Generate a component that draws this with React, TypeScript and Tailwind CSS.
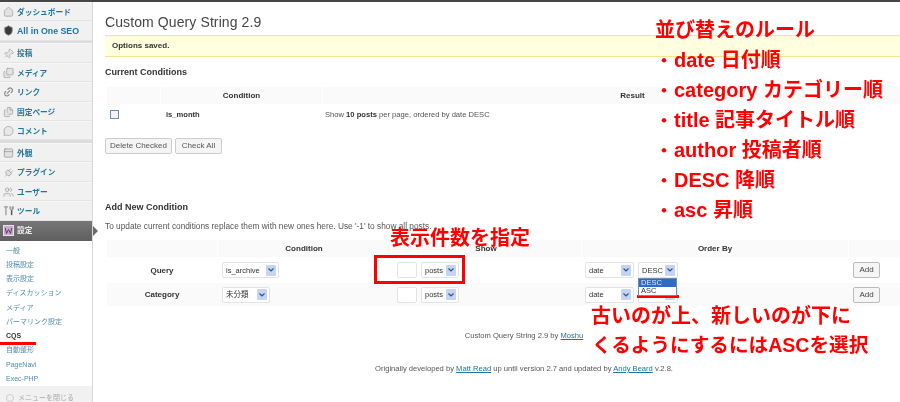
import { Files, House, Images, Link2, MessageCircle, PanelTop, Pin, Plug, Shield, Users } from "lucide-react";
import type { ReactNode } from "react";

const FONT = "[font-family:'Liberation_Sans','Noto_Sans_CJK_JP',sans-serif]";

function SettingsIcon() {
  return (
    <svg width="11" height="11" viewBox="0 0 11 11" className="shrink-0">
      <rect x="0.5" y="0.5" width="10" height="10" fill="#c9a9cc" stroke="#eadfec" />
      <path d="M2.3 3l1.200 5.500 2-4 2 4 1.200-5.500" fill="none" stroke="#5c3d66" strokeWidth="1" />
    </svg>
  );
}

function ToolsIcon() {
  return (
    <svg width="12" height="12" viewBox="0 0 12 12">
      <path d="M1 1.500h4.500M3.200 1.500v9" fill="none" stroke="#999" strokeWidth="1.400" />
      <path d="M8.500 1v3M10.300 1v3M7.500 1v2.500q0 1.300 1.900 1.300t1.900-1.300V1" fill="none" stroke="#777" strokeWidth="0.800" />
      <path d="M9.400 5v5.500" fill="none" stroke="#555" strokeWidth="1.600" />
    </svg>
  );
}

function MenuItem({ icon, label }: { icon: ReactNode; label: string }) {
  return (
    <div className="flex h-[19.5px] items-center gap-[3px] border-b border-b-[#e4e4e4] border-t border-t-[#f7f7f7] pl-[3px]">
      <span className="flex w-[11px] shrink-0 justify-center pt-[1px] text-[#8a8a8a]">{icon}</span>
      <span className="whitespace-nowrap pt-[2px] text-[7.7px] font-bold text-[#21759b]">{label}</span>
    </div>
  );
}

function Separator() {
  return <div className="h-[2.5px] bg-[#dcdcdc]" />;
}

function Sidebar() {
  const sub = ["一般", "投稿設定", "表示設定", "ディスカッション", "メディア", "パーマリンク設定"];
  return (
    <aside className="flex w-[93px] shrink-0 flex-col border-r border-r-[#d8d8d8] bg-[#f1f1f1]">
      <MenuItem icon={<House size={12} strokeWidth={1.2} fill="#e2e2e2" />} label="ダッシュボード" />
      <div className="flex h-[19.5px] items-center gap-[3px] border-b border-b-[#e4e4e4] pl-[3px]">
        <Shield size={11} fill="#3a3a3a" stroke="#777" className="shrink-0" />
        <span className="whitespace-nowrap pt-[1px] text-[8.8px] font-bold text-[#21759b]">All in One SEO</span>
      </div>
      <Separator />
      <MenuItem icon={<Pin size={12} strokeWidth={1.1} fill="#e8e8e8" className="rotate-45" />} label="投稿" />
      <MenuItem icon={<Images size={12} strokeWidth={1.2} fill="#e2e2e2" />} label="メディア" />
      <MenuItem icon={<Link2 size={12} strokeWidth={2.4} className="-rotate-45" />} label="リンク" />
      <MenuItem icon={<Files size={12} strokeWidth={1.2} fill="#e2e2e2" />} label="固定ページ" />
      <MenuItem icon={<MessageCircle size={12} strokeWidth={1.2} fill="#e8e8e8" />} label="コメント" />
      <Separator />
      <MenuItem icon={<PanelTop size={12} strokeWidth={1.4} fill="#e2e2e2" />} label="外観" />
      <MenuItem icon={<Plug size={12} strokeWidth={1.2} fill="#e2e2e2" className="rotate-45" />} label="プラグイン" />
      <MenuItem icon={<Users size={12} strokeWidth={1.2} fill="#e8e8e8" />} label="ユーザー" />
      <MenuItem icon={<ToolsIcon />} label="ツール" />
      <div className="relative flex h-[20px] items-center gap-[3px] bg-gradient-to-b from-[#777] to-[#5f5f5f] pl-[3px]">
        <SettingsIcon />
        <span className="pt-[1px] text-[7.7px] font-bold text-[#eeeeee]">設定</span>
        <span className="absolute -right-[6px] top-[5px] h-0 w-0 border-y-[5px] border-l-[5px] border-y-transparent border-l-[#6a6a6a]" />
      </div>
      <div className="flex flex-col bg-white pl-[6px] pt-[3px] text-[7px] leading-[14.25px] text-[#4f8fae]">
        {sub.map((s) => (
          <span key={s} className="h-[14.25px] whitespace-nowrap">{s}</span>
        ))}
        <span className="h-[14.25px] font-bold text-[#333]">CQS</span>
        <span className="h-[14.25px]">自動整形</span>
        <span className="h-[14.25px]">PageNavi</span>
        <span className="h-[14.25px]">Exec-PHP</span>
      </div>
      <div className="flex flex-1 items-start gap-[4px] bg-[#f1f1f1] pl-[6px] pt-[8px] text-[7px] leading-[8px] text-[#aaa]">
        <span className="h-[8px] w-[8px] shrink-0 rounded-full border border-[#ccc]" />
        メニューを閉じる
      </div>
    </aside>
  );
}

function Select({ label, width }: { label: string; width: string }) {
  return (
    <div className={`flex h-[16px] items-center justify-between rounded-[2px] border border-[#e3e3e3] bg-white pl-[3px] pr-[2px] text-[7.5px] text-[#333] ${width}`}>
      <span className="whitespace-nowrap pt-[1px]">{label}</span>
      <span className="flex h-[11px] w-[10px] items-center justify-center rounded-[1px] bg-[#c3d4f7]">
        <svg width="6" height="4" viewBox="0 0 6 4">
          <path d="M0.500 0.500L3 3l2.500-2.500" fill="none" stroke="#33527f" strokeWidth="1.200" />
        </svg>
      </span>
    </div>
  );
}

function ShowCell() {
  return (
    <div className="flex items-center gap-[4px] pl-[6px]">
      <div className="h-[16px] w-[20px] rounded-[2px] border border-[#e3e3e3] bg-white" />
      <Select label="posts" width="w-[38px]" />
    </div>
  );
}

function AddButton() {
  return (
    <button className="flex h-[16px] w-[27px] items-center justify-center rounded-[2px] border border-[#bbb] bg-[#f5f5f5] text-[8px] text-[#444]">
      Add
    </button>
  );
}

function Main() {
  return (
    <main className="min-w-0 flex-1 overflow-hidden">
      <div className="w-[795px] pl-[12px] pt-[11px] text-[8.3px] text-[#444]">
        <h1 className="text-[14px] leading-[18px] tracking-[0.1px] text-[#464646]">Custom Query String 2.9</h1>
        <div className="mt-[4px] -mr-[100px] flex h-[22px] items-center border-y border-y-[#f0e68c] bg-[#ffffe0] pl-[7px] text-[8px] font-bold text-[#333]">
          Options saved.
        </div>
        <h3 className="mt-[9px] text-[9px] font-bold leading-[12px] text-[#333]">Current Conditions</h3>
        <div className="ml-[2px] mt-[9px] -mr-[100px]">
          <div className="grid h-[17px] grid-cols-[53px_161px_1fr] gap-[1px] text-[8px] font-bold text-[#333]">
            <div className="bg-[#fafafa]" />
            <div className="flex items-center justify-center bg-[#fafafa]">Condition</div>
            <div className="flex items-center justify-center bg-[#fafafa] pr-[46px]">Result</div>
          </div>
          <div className="grid h-[21px] grid-cols-[53px_161px_1fr] items-center gap-[1px] text-[7.6px]">
            <div className="pl-[3px]">
              <div className="h-[9px] w-[9px] border border-[#6b8db5] bg-[#f3f3f3]" />
            </div>
            <div className="pl-[5px] font-bold text-[#333]">is_month</div>
            <div className="pl-[2px] text-[#555]">Show <b className="text-[#333]">10 posts</b> per page, ordered by date DESC</div>
          </div>
        </div>
        <div className="mt-[13px] flex gap-[3px] text-[8px]">
          <button className="h-[16px] w-[67px] rounded-[2px] border border-[#ccc] bg-[#f5f5f5] text-[#555]">Delete Checked</button>
          <button className="h-[16px] w-[47px] rounded-[2px] border border-[#ccc] bg-[#f5f5f5] text-[#555]">Check All</button>
        </div>
        <h3 className="mt-[47px] text-[9px] font-bold leading-[12px] text-[#333]">Add New Condition</h3>
        <p className="mt-[7px] leading-[12px] text-[#555]">To update current conditions replace them with new ones here. Use '-1' to show all posts.</p>
        <div className="ml-[2px] mt-[8px] -mr-[40px] text-[8px] text-[#333]">
          <div className="grid h-[17px] grid-cols-[110px_172px_190px_266px_1fr] gap-[1px] font-bold">
            <div className="bg-[#fafafa]" />
            <div className="flex items-center justify-center bg-[#fafafa]">Condition</div>
            <div className="flex items-center justify-center bg-[#fafafa]">Show</div>
            <div className="flex items-center justify-center bg-[#fafafa]">Order By</div>
            <div className="bg-[#fafafa]" />
          </div>
          <div className="grid h-[26px] grid-cols-[110px_172px_190px_266px_1fr] items-center gap-[1px]">
            <div className="pt-[1px] text-center font-bold">Query</div>
            <div className="pl-[4px]"><Select label="is_archive" width="w-[57px]" /></div>
            <ShowCell />
            <div className="relative flex gap-[4px] pl-[3px]">
              <Select label="date" width="w-[49px]" />
              <Select label="DESC" width="w-[40px]" />
              <div className="absolute left-[56px] top-[16px] z-10 w-[39px] border border-[#6b8db5] bg-white text-[7.5px] leading-[8px] text-[#333]">
                <div className="bg-[#316ac5] text-[#dfe8f8]">&nbsp;DESC</div>
                <div>&nbsp;ASC</div>
              </div>
            </div>
            <div className="pl-[4px]"><AddButton /></div>
          </div>
          <div className="grid h-[23px] grid-cols-[110px_172px_190px_266px_1fr] items-center gap-[1px] bg-[#fafafa]">
            <div className="pt-[1px] text-center font-bold">Category</div>
            <div className="pl-[4px]"><Select label="未分類" width="w-[48px]" /></div>
            <ShowCell />
            <div className="flex gap-[4px] pl-[3px]">
              <Select label="date" width="w-[49px]" />
              <Select label="DESC" width="w-[40px]" />
            </div>
            <div className="pl-[4px]"><AddButton /></div>
          </div>
        </div>
        <p className="mt-[24px] w-[838px] text-center text-[7.6px] leading-[12px] text-[#555]">
          Custom Query String 2.9 by <a className="text-[#21759b] underline">Moshu</a>
        </p>
        <p className="mt-[21px] w-[838px] text-center text-[7.6px] leading-[12px] text-[#555]">
          Originally developed by <a className="text-[#21759b] underline">Matt Read</a> up until version 2.7 and updated by <a className="text-[#21759b] underline">Andy Beard</a> v.2.8.
        </p>
      </div>
    </main>
  );
}

function Notes() {
  const cls = "absolute whitespace-nowrap leading-[24px] font-bold text-[#ff0000]";
  const rules = [
    ["date 日付順", "top-[48px]"],
    ["category カテゴリー順", "top-[78px]"],
    ["title 記事タイトル順", "top-[108px]"],
    ["author 投稿者順", "top-[138px]"],
    ["DESC 降順", "top-[168px]"],
    ["asc 昇順", "top-[198px]"],
  ];
  return (
    <>
      <div className={`${cls} left-[655px] top-[18px] text-[20px]`}>並び替えのルール</div>
      {rules.map(([t, top]) => (
        <div key={t} className={`${cls} left-[655px] ${top} text-[20px]`}>
          <span className="inline-block w-[19px] text-[18px]">・</span>{t}
        </div>
      ))}
      <div className={`${cls} left-[390px] top-[226px] text-[20px]`}>表示件数を指定</div>
      <div className={`${cls} left-[591px] top-[304px] text-[20px]`}>古いのが上、新しいのが下に</div>
      <div className={`${cls} left-[592px] top-[333px] text-[19.6px]`}>くるようにするにはASCを選択</div>
      <div className="absolute left-[374px] top-[255px] h-[29px] w-[91px] border-[3px] border-[#ff0000]" />
      <div className="absolute left-[0px] top-[342px] h-[3px] w-[36px] bg-[#ff0000]" />
      <div className="absolute left-[637px] top-[295px] h-[3px] w-[42px] bg-[#ff0000]" />
    </>
  );
}

export default function App() {
  return (
    <div className={`relative flex h-[402px] w-[900px] flex-col overflow-hidden bg-white blur-[0.3px] ${FONT}`}>
      <div className="h-[2px] shrink-0 bg-[#464646]" />
      <div className="flex min-h-0 flex-1">
        <Sidebar />
        <Main />
      </div>
      <Notes />
    </div>
  );
}
